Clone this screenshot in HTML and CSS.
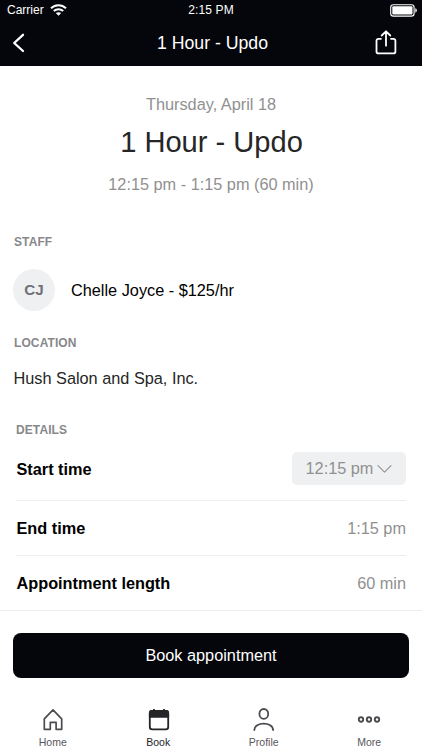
FILE: index.html
```html
<!DOCTYPE html>
<html lang="en">
<head>
<meta charset="utf-8">
<title>1 Hour - Updo</title>
<link rel="stylesheet" href="styles.css">
</head>
<body>
<div class="screen">
  <header class="top">
    <div class="status">
      <div class="carrier"><span>Carrier</span>
        <svg class="wifi" width="17" height="12" viewBox="0 0 17 12" fill="none" stroke="#fff" stroke-width="2"><path d="M1 4.3C5.2.2 11.8.2 16 4.3"/><path d="M3.8 7.1c2.7-2.5 6.7-2.5 9.4 0"/><path d="M8.5 11.8 5.8 9.1c1.5-1.3 3.9-1.3 5.4 0z" fill="#fff" stroke="none"/></svg>
      </div>
      <span class="clock">2:15 PM</span>
      <svg class="battery" width="28" height="13" viewBox="0 0 28 13"><rect x=".7" y=".7" width="23.4" height="11.4" rx="2.7" fill="none" stroke="#fff" stroke-width="1.1"/><rect x="2.3" y="2.3" width="20.2" height="8.2" rx="1" fill="#fff"/><path d="M25.3 4.3c2 .6 2 3.8 0 4.4z" fill="#fff"/></svg>
    </div>
    <nav class="nav">
      <svg class="back" width="14" height="20" viewBox="0 0 14 20" fill="none" stroke="#fff" stroke-width="2.3" stroke-linecap="round" stroke-linejoin="round"><path d="M11 1.8 2.2 10 11 18"/></svg>
      <h2 class="nav-title">1 Hour - Updo</h2>
      <svg class="share" width="22" height="26" viewBox="0 0 22 26" fill="none" stroke="#fff" stroke-width="1.8" stroke-linecap="round" stroke-linejoin="round"><path d="M6 8.8H3.5c-1.3 0-2 .7-2 2v10.6c0 1.3.7 2 2 2h14.9c1.3 0 2-.7 2-2V10.8c0-1.3-.7-2-2-2H16M11 15.7V1.7M6.7 5.5 11 1.3l4.3 4.2"/></svg>
    </nav>
  </header>
  <main class="content">
    <section class="summary">
      <p class="date">Thursday, April 18</p>
      <h1 class="service">1 Hour - Updo</h1>
      <p class="range">12:15 pm - 1:15 pm (60 min)</p>
    </section>
    <h3 class="label staff-label">STAFF</h3>
    <div class="staff"><span class="avatar">CJ</span><span class="staff-name">Chelle Joyce - $125/hr</span></div>
    <h3 class="label location-label">LOCATION</h3>
    <p class="location">Hush Salon and Spa, Inc.</p>
    <section class="details">
      <h3 class="label details-label">DETAILS</h3>
      <div class="row row-start"><span class="key">Start time</span>
        <button class="select"><span class="value">12:15 pm</span><svg width="15" height="9" viewBox="0 0 15 9" fill="none" stroke="#949596" stroke-width="1.15" stroke-linecap="round" stroke-linejoin="round"><path d="m1 1.7 6.5 6.5L14 1.7"/></svg></button>
      </div>
      <div class="row"><span class="key">End time</span><span class="value">1:15 pm</span></div>
      <div class="row"><span class="key">Appointment length</span><span class="value">60 min</span></div>
    </section>
  </main>
  <div class="action"><button class="book">Book appointment</button></div>
  <footer class="tabs">
    <div class="tab"><svg width="24" height="26" viewBox="0 0 24 26" fill="none" stroke="#4b4c50" stroke-width="1.7" stroke-linejoin="round"><path d="m12 3.9 8.7 9v10.4h-5.6v-7H9.3v7H3.3V12.9z"/></svg><span>Home</span></div>
    <div class="tab active"><svg width="24" height="26" viewBox="0 0 24 26" fill="none" stroke="#242529" stroke-width="1.8"><rect x="3.8" y="4.8" width="18.4" height="18.6" rx="2.3"/><path d="M3.8 10.8v-4c0-1.3.7-2 2-2h14.4c1.3 0 2 .7 2 2v4z" fill="#242529"/><path d="M8 3v3M18 3v3"/></svg><span>Book</span></div>
    <div class="tab"><svg width="24" height="26" viewBox="0 0 24 26" fill="none" stroke="#4b4c50" stroke-width="1.8" stroke-linecap="round"><ellipse cx="11.8" cy="7.9" rx="4.4" ry="4.9"/><path d="M2.3 24c0-8.6 18.8-8.6 18.8 0"/></svg><span>Profile</span></div>
    <div class="tab"><svg width="24" height="26" viewBox="0 0 24 26" fill="none" stroke="#4b4c50" stroke-width="1.9"><circle cx="4" cy="13.5" r="2.2"/><circle cx="12" cy="13.5" r="2.2"/><circle cx="20" cy="13.5" r="2.2"/></svg><span>More</span></div>
  </footer>
</div>
</body>
</html>
```
FILE: styles.css
```css
* { box-sizing: border-box; }
body, h1, h2, h3, p { margin: 0; font-weight: 400; }
body { font-family: "Liberation Sans", Arial, sans-serif; background: #fff; color: #000; }
button { border: 0; padding: 0; font: inherit; }
svg { display: block; flex: none; }
span, p, h1, h2, h3 { white-space: nowrap; }
.screen { width: 422px; height: 750px; overflow: hidden; display: flex; flex-direction: column; }
.top { height: 66px; flex: none; background: #05060b; color: #fff; }
.status { height: 20px; padding: 0 4px 0 7px; display: grid; grid-template-columns: 1fr auto 1fr; align-items: center; font-size: 12px; line-height: 20px; }
.carrier { display: flex; align-items: center; gap: 6px; }
.clock { margin-right: 3px; letter-spacing: .15px; }
.battery { justify-self: end; }
.nav { height: 46px; padding: 0 25px 0 12px; display: grid; grid-template-columns: 1fr auto 1fr; align-items: center; }
.nav-title { font-size: 17.7px; line-height: 46px; margin-left: 16px; }
.share { justify-self: end; }
.content { height: 544px; flex: none; }
.summary { height: 163px; padding-top: 28px; text-align: center; color: #909090; font-size: 16.3px; }
.date { line-height: 20px; }
.service { color: #262626; font-size: 29.1px; line-height: 36px; margin-top: 10px; padding-left: 1px; }
.range { line-height: 20px; margin-top: 14px; }
.label { color: #87888a; font-size: 12px; line-height: 14px; font-weight: 700; letter-spacing: .1px; }
.staff-label { margin: 6px 0 20px 14px; }
.staff { height: 42px; padding-left: 13px; display: flex; align-items: center; gap: 16px; }
.avatar { width: 42px; height: 42px; border-radius: 50%; background: #eff0f2; color: #707176; font-size: 15.2px; font-weight: 700; line-height: 42px; text-align: center; }
.staff-name { font-size: 16.3px; }
.location-label { margin: 25px 0 0 14px; }
.location { margin: 18px 0 0 13.5px; color: #262626; font-size: 16.3px; line-height: 20px; }
.details { margin: 35px 16px 0; }
.row { height: 55px; display: flex; align-items: center; justify-content: space-between; border-bottom: 1px solid #ededee; }
.row:last-child { border: 0; }
.row-start { height: 64px; }
.row-start .key { padding-top: 2px; }
.key { font-size: 16.3px; font-weight: 700; padding-left: .5px; }
.value { font-size: 16.3px; color: #909090; }
.select { width: 114px; height: 33px; border-radius: 5px; background: #eff0f2; display: flex; align-items: center; justify-content: center; gap: 4px; }
.action { height: 90px; flex: none; border-top: 1px solid #ededee; padding: 22px 13px 0; }
.book { width: 396px; height: 45px; border-radius: 8px; background: #05060b; color: #fff; font-size: 16.3px; }
.tabs { height: 50px; padding-top: 6px; display: grid; grid-template-columns: repeat(4, 1fr); }
.tab { display: flex; flex-direction: column; align-items: center; color: #56575c; font-size: 10.5px; line-height: 12px; gap: 4px; }
.active { color: #242529; }
```
